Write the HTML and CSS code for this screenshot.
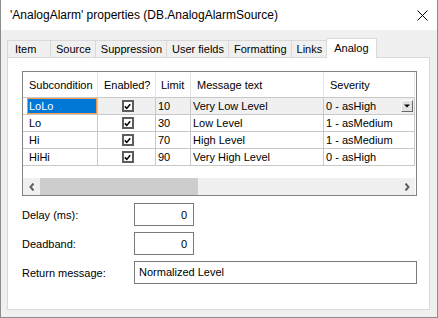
FILE: index.html
```html
<!DOCTYPE html>
<html lang="en">

<head>
    <meta charset="UTF-8">
    <title>'AnalogAlarm' properties</title>
    <link rel="stylesheet" href="styles.css">
</head>

<body>
    <div class="window">
        <div class="titlebar">
            <span class="title">'AnalogAlarm' properties (DB.AnalogAlarmSource)</span>
            <svg class="close" width="11" height="11" viewBox="0 0 11 11">
                <path d="M0.5 0.5 L10.5 10.5 M10.5 0.5 L0.5 10.5" stroke="#000" stroke-width="1" fill="none" />
            </svg>
        </div>

        <div class="content">
            <div class="tabs">
                <div class="tab first">Item</div>
                <div class="tab">Source</div>
                <div class="tab">Suppression</div>
                <div class="tab">User fields</div>
                <div class="tab">Formatting</div>
                <div class="tab">Links</div>
                <div class="tab active">Analog</div>
            </div>

            <div class="panel">
                <div class="grid">
                    <div class="row head">
                        <div class="cell c1">Subcondition</div>
                        <div class="cell c2">Enabled?</div>
                        <div class="cell c3">Limit</div>
                        <div class="cell c4">Message text</div>
                        <div class="cell c5">Severity</div>
                    </div>
                    <div class="row current">
                        <div class="cell c1"><span class="sel">LoLo</span></div>
                        <div class="cell c2"><span class="check"><svg width="7" height="7" viewBox="0 0 7 7"><path d="M0.8 3.4 L2.8 5.4 L6.2 1.2" stroke="#000" stroke-width="1.5" fill="none" /></svg></span></div>
                        <div class="cell c3">10</div>
                        <div class="cell c4">Very Low Level</div>
                        <div class="cell c5">0 - asHigh<span class="drop"><svg width="6" height="4" viewBox="0 0 6 4"><path d="M0 0.5 H6 L3 3.5 Z" fill="#000" /></svg></span></div>
                    </div>
                    <div class="row">
                        <div class="cell c1">Lo</div>
                        <div class="cell c2"><span class="check"><svg width="7" height="7" viewBox="0 0 7 7"><path d="M0.8 3.4 L2.8 5.4 L6.2 1.2" stroke="#000" stroke-width="1.5" fill="none" /></svg></span></div>
                        <div class="cell c3">30</div>
                        <div class="cell c4">Low Level</div>
                        <div class="cell c5">1 - asMedium</div>
                    </div>
                    <div class="row">
                        <div class="cell c1">Hi</div>
                        <div class="cell c2"><span class="check"><svg width="7" height="7" viewBox="0 0 7 7"><path d="M0.8 3.4 L2.8 5.4 L6.2 1.2" stroke="#000" stroke-width="1.5" fill="none" /></svg></span></div>
                        <div class="cell c3">70</div>
                        <div class="cell c4">High Level</div>
                        <div class="cell c5">1 - asMedium</div>
                    </div>
                    <div class="row">
                        <div class="cell c1">HiHi</div>
                        <div class="cell c2"><span class="check"><svg width="7" height="7" viewBox="0 0 7 7"><path d="M0.8 3.4 L2.8 5.4 L6.2 1.2" stroke="#000" stroke-width="1.5" fill="none" /></svg></span></div>
                        <div class="cell c3">90</div>
                        <div class="cell c4">Very High Level</div>
                        <div class="cell c5">0 - asHigh</div>
                    </div>
                    <div class="filler"></div>
                    <div class="hscroll">
                        <div class="arrow">
                            <svg width="6" height="8" viewBox="0 0 6 8"><path d="M4.5 0.5 L1.5 4 L4.5 7.5" stroke="#606060" stroke-width="2" fill="none" /></svg>
                        </div>
                        <div class="track">
                            <div class="thumb"></div>
                        </div>
                        <div class="arrow">
                            <svg width="6" height="8" viewBox="0 0 6 8"><path d="M1.5 0.5 L4.5 4 L1.5 7.5" stroke="#606060" stroke-width="2" fill="none" /></svg>
                        </div>
                    </div>
                </div>

                <div class="fields">
                    <div class="field">
                        <span class="label">Delay (ms):</span>
                        <div class="edit num">0</div>
                    </div>
                    <div class="field">
                        <span class="label">Deadband:</span>
                        <div class="edit num">0</div>
                    </div>
                    <div class="field">
                        <span class="label">Return message:</span>
                        <div class="edit wide">Normalized Level</div>
                    </div>
                </div>
            </div>
        </div>
    </div>
</body>

</html>
```

FILE: styles.css
```css
* {
    box-sizing: border-box;
}

body {
    margin: 0;
    font-family: "Liberation Sans", Arial, sans-serif;
    font-size: 11px;
    color: #000;
    background-color: #fff;
}

.window {
    width: 438px;
    height: 318px;
    border: 1px solid #8c8c8c;
    border-top: none;
    background-color: #f0f0f0;
    display: flex;
    flex-direction: column;
}

.titlebar {
    height: 30px;
    background-color: #fff;
    display: flex;
    align-items: center;
    justify-content: space-between;
    padding: 0 9px 0 9px;
}

.title {
    font-size: 12px;
}

.content {
    flex: 1;
    display: flex;
    flex-direction: column;
    padding: 8px 7px 7px 6px;
}

/* tab strip */
.tabs {
    display: flex;
    height: 19px;
    align-items: flex-end;
}

.tab {
    height: 17px;
    line-height: 16px;
    padding: 0 4px 0 5px;
    margin-left: -1px;
    border: 1px solid #d9d9d9;
    border-bottom: none;
    background-color: #f0f0f0;
}

.tab.first {
    margin-left: 0;
    min-width: 44px;
    padding-left: 7px;
}

.tab.active {
    height: 20px;
    line-height: 18px;
    padding: 0 7px 0 7px;
    margin-bottom: -1px;
    background-color: #fff;
    position: relative;
    z-index: 1;
}

.panel {
    flex: 1;
    background-color: #fff;
    border: 1px solid #d9d9d9;
    padding: 13px 0 0 14px;
}

/* data grid */
.grid {
    width: 395px;
    height: 125px;
    border: 1px solid #828282;
    display: flex;
    flex-direction: column;
}

.row {
    display: flex;
    height: 17px;
}

.row.head {
    height: 26px;
}

.cell {
    height: 100%;
    border-right: 1px solid #c8c8c8;
    border-bottom: 1px solid #c8c8c8;
    padding-left: 2px;
    display: flex;
    align-items: center;
    white-space: nowrap;
    overflow: hidden;
}

.head .cell {
    border-right-color: #e5e5e5;
    padding-left: 6px;
}

.head .cell.c3 {
    padding-left: 5px;
}

.row .c1 {
    padding-left: 6px;
}

.current .cell {
    background-color: #f0f0f0;
}

.current .c1 {
    background-color: #fff;
    padding-left: 4px;
}

.c1 { width: 75px; }
.c2 { width: 58px; }
.c3 { width: 35px; }
.c4 { width: 133px; }
.c5 { width: 91px; }

.row .c2 {
    justify-content: center;
    padding-left: 0;
}

.head .c2 {
    justify-content: flex-start;
    padding-left: 6px;
}

.c5 {
    justify-content: space-between;
}

.sel {
    flex: 1;
    height: 100%;
    background-color: #0078d7;
    border: 1px solid #f09a4b;
    color: #fff;
    padding-left: 1px;
    display: flex;
    align-items: center;
}

.check {
    width: 12px;
    height: 12px;
    border: 2px solid #5c5c5c;
    background-color: #fff;
    display: flex;
    align-items: center;
    justify-content: center;
    margin-left: 2px;
}

.drop {
    width: 12px;
    height: 12px;
    margin-right: 1px;
    border: 1px solid;
    border-color: #fff #696969 #696969 #fff;
    background-color: #e3e3e3;
    display: flex;
    align-items: center;
    justify-content: center;
}

.filler {
    flex: 1;
}

.hscroll {
    height: 17px;
    display: flex;
    background-color: #f0f0f0;
    margin-right: 1px;
}

.arrow {
    width: 17px;
    display: flex;
    align-items: center;
    justify-content: center;
}

.track {
    flex: 1;
    display: flex;
}

.thumb {
    width: 158px;
    background-color: #cdcdcd;
}

/* edit fields */
.fields {
    margin-top: 7px;
    display: flex;
    flex-direction: column;
    gap: 6px;
}

.field {
    display: flex;
    align-items: center;
}

.label {
    width: 112px;
}

.edit {
    height: 23px;
    border: 1px solid #7a7a7a;
    display: flex;
    align-items: center;
    background-color: #fff;
}

.edit.num {
    width: 60px;
    justify-content: flex-end;
    padding-right: 6px;
}

.edit.wide {
    width: 283px;
    padding-left: 4px;
    padding-bottom: 1px;
}
```
